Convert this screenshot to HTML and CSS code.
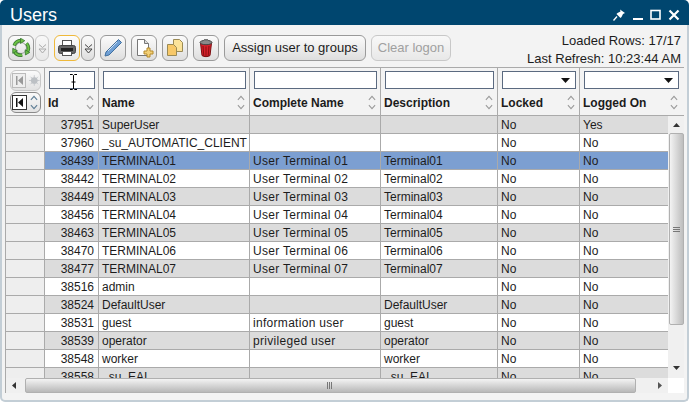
FILE: index.html
```html
<!DOCTYPE html>
<html lang="en">
<head>
<meta charset="utf-8">
<title>Users</title>
<link rel="stylesheet" href="styles.css">
</head>
<body>
<div class="window">
  <header class="titlebar">
    <span class="title">Users</span>
    <div class="win-actions">
      <svg class="win-icon" width="14" height="14" viewBox="0 0 14 14"><path d="M8 1.500l5 3.500-2 1-1.500 3-1 1-4-4 1-1 3-1.500z" fill="#fff"/><path d="M5 8.500l-3.500 4" stroke="#fff" stroke-width="1.3"/></svg>
      <svg class="win-icon" width="12" height="14" viewBox="0 0 12 14"><rect x="1" y="10" width="10" height="2" fill="#fff"/></svg>
      <svg class="win-icon" width="12" height="14" viewBox="0 0 12 14"><rect x="1" y="2.500" width="9" height="8.500" fill="none" stroke="#fff" stroke-width="1.6"/></svg>
      <svg class="win-icon" width="12" height="14" viewBox="0 0 12 14"><path d="M1.500 2.500l9 9M10.500 2.500l-9 9" stroke="#fff" stroke-width="2.2"/></svg>
    </div>
  </header>
  <div class="content">
    <div class="toolbar">
      <button class="tb-btn" type="button">
        <svg width="20" height="20" viewBox="0 0 20 20"><circle cx="10" cy="10" r="5.500" fill="none" stroke="#9a9f9a" stroke-width="1"/><g id="seg"><path d="M3.200 7.500A7.500 7.500 0 0 1 10 2.500" fill="none" stroke="#2f6f2a" stroke-width="3.400"/><path d="M3.200 7.500A7.500 7.500 0 0 1 10 2.500" fill="none" stroke="#6cc045" stroke-width="2"/><path d="M9.500 .2l4.300 2.500-4.300 2.800z" fill="#6cc045" stroke="#2f6f2a" stroke-width=".7"/></g><g transform="rotate(120 10 10)"><path d="M3.200 7.500A7.500 7.500 0 0 1 10 2.500" fill="none" stroke="#2f6f2a" stroke-width="3.400"/><path d="M3.200 7.500A7.500 7.500 0 0 1 10 2.500" fill="none" stroke="#6cc045" stroke-width="2"/><path d="M9.500 .2l4.300 2.500-4.300 2.800z" fill="#6cc045" stroke="#2f6f2a" stroke-width=".7"/></g><g transform="rotate(240 10 10)"><path d="M3.200 7.500A7.500 7.500 0 0 1 10 2.500" fill="none" stroke="#2f6f2a" stroke-width="3.400"/><path d="M3.200 7.500A7.500 7.500 0 0 1 10 2.500" fill="none" stroke="#6cc045" stroke-width="2"/><path d="M9.500 .2l4.300 2.500-4.300 2.800z" fill="#6cc045" stroke="#2f6f2a" stroke-width=".7"/></g></svg>
      </button>
      <button class="tb-arrow is-disabled" type="button">
        <svg width="9" height="11" viewBox="0 0 9 11"><path d="M1 1.500l3.500 3 3.500-3M1 6h7L4.500 10z" fill="none" stroke="#aaa"/></svg>
      </button>
      <button class="tb-btn is-active tb-gap" type="button">
        <svg width="20" height="20" viewBox="0 0 20 20"><rect x="5.500" y="2.500" width="9" height="5" fill="#fff" stroke="#555"/><rect x="1.500" y="7.500" width="17" height="8" rx="2" fill="#666" stroke="#444"/><rect x="4" y="10" width="12" height="3" fill="#222"/><rect x="5.500" y="13.500" width="9" height="4" fill="#fff" stroke="#555"/></svg>
      </button>
      <button class="tb-arrow" type="button">
        <svg width="9" height="11" viewBox="0 0 9 11"><path d="M1 1.500l3.500 3 3.500-3M1 6h7L4.500 10z" fill="none" stroke="#444"/></svg>
      </button>
      <button class="tb-btn tb-gap" type="button">
        <svg width="20" height="20" viewBox="0 0 20 20"><path d="M15.500 1.500l3 3L6 17l-4 1 1-4z" fill="#6f9fd4" stroke="#3f6f9f"/><path d="M5 13l9-9" stroke="#cfe0f2"/></svg>
      </button>
      <button class="tb-btn tb-gap" type="button">
        <svg width="20" height="20" viewBox="0 0 20 20"><path d="M3.500 1.500h7l4 4v12h-11z" fill="#fff" stroke="#777"/><path d="M10.500 1.500v4h4" fill="#ddd" stroke="#777"/><path d="M13 10h3v3h3v3h-3v3h-3v-3h-3v-3h3z" fill="#f3d077" stroke="#b58a2a"/></svg>
      </button>
      <button class="tb-btn tb-gap" type="button">
        <svg width="20" height="20" viewBox="0 0 20 20"><path d="M8.500 1.500h6l3 3v9h-9z" fill="#fbe39a" stroke="#9a8a55"/><path d="M2.500 6.500h6l3 3v8h-9z" fill="#f7c868" stroke="#9a8a55"/></svg>
      </button>
      <button class="tb-btn tb-gap" type="button">
        <svg width="20" height="20" viewBox="0 0 20 20"><path d="M4.500 5l1.500 12.500c1 1.500 7 1.500 8 0L15.500 5c-2 1.500-9 1.500-11 0z" fill="#d8202a" stroke="#7a0d10"/><path d="M7 8l.8 10M10 8.500V18.500M13 8l-.8 10" stroke="#8a0d10"/><ellipse cx="10" cy="4.500" rx="6" ry="2.200" fill="#8a8a8a" stroke="#444"/><rect x="8" y="1" width="4" height="2" fill="#777"/></svg>
      </button>
      <button class="tb-text tb-assign tb-gap" type="button">Assign user to groups</button>
      <button class="tb-text tb-clear tb-gap is-disabled" type="button">Clear logon</button>
      <div class="status">
        <span>Loaded Rows: 17/17</span>
        <span>Last Refresh: 10:23:44 AM</span>
      </div>
    </div>
    <div class="grid">
      <div class="grid-head">
        <div class="hcell hcell-tools">
          <div class="mini-group is-off">
            <span class="mini-first"><svg width="9" height="9" viewBox="0 0 9 9"><path d="M1 0h1.500v9H1zM8 0v9L3 4.500z" fill="#999"/></svg></span>
            <svg width="11" height="11" viewBox="0 0 11 11"><path d="M5.500 0v11M0 5.500h11M1.600 1.600l7.800 7.800M9.400 1.600l-7.800 7.800" stroke="#c4c8cc"/><circle cx="5.500" cy="5.500" r="3.500" fill="#bcc0c4"/></svg>
          </div>
          <div class="mini-group">
            <span class="mini-first"><svg width="9" height="9" viewBox="0 0 9 9"><path d="M1 0h1.500v9H1zM8 0v9L3 4.500z" fill="#111"/></svg></span>
            <svg width="8" height="15" viewBox="0 0 9 16"><path d="M1 5l3.500-4L8 5M1 11l3.500 4L8 11" fill="none" stroke="#5f7f96" stroke-width="1.300"/></svg>
          </div>
        </div>
        <div class="hcell"><input class="filter" type="text" aria-label="Id"><div class="hlabel"><span>Id</span><svg class="sort" width="8" height="15" viewBox="0 0 9 16"><path d="M1 5l3.500-4L8 5M1 11l3.500 4L8 11" fill="none" stroke="#9a9a9a" stroke-width="1.200"/></svg></div></div>
        <div class="hcell"><input class="filter" type="text" aria-label="Name"><div class="hlabel"><span>Name</span><svg class="sort" width="8" height="15" viewBox="0 0 9 16"><path d="M1 5l3.500-4L8 5M1 11l3.500 4L8 11" fill="none" stroke="#9a9a9a" stroke-width="1.200"/></svg></div></div>
        <div class="hcell"><input class="filter" type="text" aria-label="Complete Name"><div class="hlabel"><span>Complete Name</span><svg class="sort" width="8" height="15" viewBox="0 0 9 16"><path d="M1 5l3.500-4L8 5M1 11l3.500 4L8 11" fill="none" stroke="#9a9a9a" stroke-width="1.200"/></svg></div></div>
        <div class="hcell"><input class="filter" type="text" aria-label="Description"><div class="hlabel"><span>Description</span><svg class="sort" width="8" height="15" viewBox="0 0 9 16"><path d="M1 5l3.500-4L8 5M1 11l3.500 4L8 11" fill="none" stroke="#9a9a9a" stroke-width="1.200"/></svg></div></div>
        <div class="hcell"><div class="filter select"><svg width="9" height="5" viewBox="0 0 9 5"><path d="M0 0h9L4.500 5z" fill="#111"/></svg></div><div class="hlabel"><span>Locked</span><svg class="sort" width="8" height="15" viewBox="0 0 9 16"><path d="M1 5l3.500-4L8 5M1 11l3.500 4L8 11" fill="none" stroke="#9a9a9a" stroke-width="1.200"/></svg></div></div>
        <div class="hcell hcell-last"><div class="filter select"><svg width="9" height="5" viewBox="0 0 9 5"><path d="M0 0h9L4.500 5z" fill="#111"/></svg></div><div class="hlabel"><span>Logged On</span><svg class="sort" width="8" height="15" viewBox="0 0 9 16"><path d="M1 5l3.500-4L8 5M1 11l3.500 4L8 11" fill="none" stroke="#9a9a9a" stroke-width="1.200"/></svg></div></div>
      </div>
      <div class="grid-main">
        <div class="rows">
          <div class="row alt"><i></i><b>37951</b><span>SuperUser</span><span></span><span></span><span>No</span><span>Yes</span></div>
          <div class="row"><i></i><b>37960</b><span>_su_AUTOMATIC_CLIENT</span><span></span><span></span><span>No</span><span>No</span></div>
          <div class="row sel"><i></i><b>38439</b><span>TERMINAL01</span><span>User Terminal 01</span><span>Terminal01</span><span>No</span><span>No</span></div>
          <div class="row"><i></i><b>38442</b><span>TERMINAL02</span><span>User Terminal 02</span><span>Terminal02</span><span>No</span><span>No</span></div>
          <div class="row alt"><i></i><b>38449</b><span>TERMINAL03</span><span>User Terminal 03</span><span>Terminal03</span><span>No</span><span>No</span></div>
          <div class="row"><i></i><b>38456</b><span>TERMINAL04</span><span>User Terminal 04</span><span>Terminal04</span><span>No</span><span>No</span></div>
          <div class="row alt"><i></i><b>38463</b><span>TERMINAL05</span><span>User Terminal 05</span><span>Terminal05</span><span>No</span><span>No</span></div>
          <div class="row"><i></i><b>38470</b><span>TERMINAL06</span><span>User Terminal 06</span><span>Terminal06</span><span>No</span><span>No</span></div>
          <div class="row alt"><i></i><b>38477</b><span>TERMINAL07</span><span>User Terminal 07</span><span>Terminal07</span><span>No</span><span>No</span></div>
          <div class="row"><i></i><b>38516</b><span>admin</span><span></span><span></span><span>No</span><span>No</span></div>
          <div class="row alt"><i></i><b>38524</b><span>DefaultUser</span><span></span><span>DefaultUser</span><span>No</span><span>No</span></div>
          <div class="row"><i></i><b>38531</b><span>guest</span><span>information user</span><span>guest</span><span>No</span><span>No</span></div>
          <div class="row alt"><i></i><b>38539</b><span>operator</span><span>privileged user</span><span>operator</span><span>No</span><span>No</span></div>
          <div class="row"><i></i><b>38548</b><span>worker</span><span></span><span>worker</span><span>No</span><span>No</span></div>
          <div class="row alt"><i></i><b>38558</b><span>_su_EAI</span><span></span><span>_su_EAI</span><span>No</span><span>No</span></div>
        </div>
        <div class="vscroll">
          <svg class="arrow" width="7" height="4" viewBox="0 0 7 4"><path d="M0 4h7L3.500 0z" fill="#333"/></svg>
          <div class="vthumb"><svg width="7" height="5" viewBox="0 0 7 5"><path d="M0 .5h7M0 2.500h7M0 4.500h7" stroke="#777"/></svg></div>
          <svg class="arrow" width="7" height="4" viewBox="0 0 7 4"><path d="M0 0h7L3.500 4z" fill="#333"/></svg>
        </div>
      </div>
      <div class="hscroll-row">
        <div class="hscroll">
          <svg class="arrow-h" width="4" height="7" viewBox="0 0 4 7"><path d="M4 0v7L0 3.500z" fill="#333"/></svg>
          <div class="hthumb"><svg width="7" height="7" viewBox="0 0 7 7"><path d="M.5 0v7M2.500 0v7M4.500 0v7" stroke="#777"/></svg></div>
          <svg class="arrow-h" width="4" height="7" viewBox="0 0 4 7"><path d="M0 0v7l4-3.500z" fill="#555"/></svg>
        </div>
        <div class="corner"></div>
      </div>
    </div>
  </div>
  <svg class="cursor" width="7" height="16" viewBox="0 0 7 16"><path d="M0 .5h2.500l1 1 1-1H7M3.500 1.500v13M0 15.500h2.500l1-1 1 1H7M1.500 8h4" fill="none" stroke="#000"/></svg>
</div>
</body>
</html>
```

FILE: styles.css
```css
* { box-sizing: border-box; }
html, body { margin: 0; padding: 0; background: #fff; }
body { width: 689px; height: 403px; overflow: hidden; font-family: "Liberation Sans", Arial, sans-serif; font-size: 12px; color: #1c1c1c; }

.window { position: relative; width: 689px; height: 402px; display: flex; flex-direction: column; }

.titlebar { height: 25px; flex: none; background: #00466f; border-radius: 5px 5px 0 0; display: flex; align-items: center; justify-content: space-between; padding: 4px 9px 0 10px; color: #fff; }
.title { font-size: 18px; line-height: 21px; padding-top: 1px; }
.win-actions { display: flex; align-items: center; gap: 6px; }
.win-icon { display: block; }

.content { flex: 1; min-height: 0; display: flex; flex-direction: column; background: #f3f3f3; border: 1px solid #c3ced6; border-width: 0 2px 2px; border-radius: 0 0 5px 5px; padding: 10px 3px 5px 3px; }

.toolbar { height: 26px; flex: none; display: flex; align-items: stretch; padding-left: 3px; }
.toolbar button { font: inherit; padding: 0; margin: 0; cursor: default; display: flex; align-items: center; justify-content: center; border: 1px solid #9a9a9a; border-radius: 6px; background: linear-gradient(#fbfbfb, #dedede); }
.toolbar .tb-btn { width: 26px; }
.toolbar .tb-arrow { width: 14px; margin-left: 1px; }
.toolbar .tb-gap { margin-left: 5px; }
.toolbar .tb-text { font-size: 13px; color: #1c1c1c; padding-bottom: 1px; }
.toolbar .tb-assign { width: 142px; }
.toolbar .tb-clear { width: 80px; }
.toolbar .is-disabled { border-color: #c8c8c8; color: #a0a0a0; background: linear-gradient(#f8f8f8, #e8e8e8); }
.toolbar .is-active { border-color: #efb93a; background: linear-gradient(#fdfdfd, #e8e8e8); }
.status { margin-left: auto; margin-top: -3px; padding-right: 3px; display: flex; flex-direction: column; align-items: flex-end; font-size: 13px; line-height: 18px; color: #1c1c1c; height: 36px; }

.grid { margin-top: 6px; flex: none; display: flex; flex-direction: column; height: 326px; border-top: 1px solid #aaa; border-left: 1px solid #aaa; background: #fff; width: 679px; }

.grid-head { height: 48px; flex: none; display: grid; grid-template-columns: 39px 54px 151px 131px 117px 82px 1fr; background: #f3f3f3; border-bottom: 1px solid #aaa; }
.hcell { border-right: 1px solid #aaa; padding: 3px 3px 0 4px; display: flex; flex-direction: column; min-width: 0; }
.hcell-last { border-right: 0; padding-right: 5px; }
.hcell-tools { padding: 2px 0 0 4px; gap: 1px; }
.filter { height: 18px; width: 100%; flex: none; border: 1px solid #5b6a80; background: #fff; padding: 0; margin: 0; border-radius: 0; outline: 0; }
.select { display: flex; align-items: center; justify-content: flex-end; padding-right: 5px; }
.hlabel { flex: 1; display: flex; align-items: center; justify-content: space-between; font-weight: 700; padding-right: 1px; margin-left: -1px; }
.hlabel span { padding-top: 2px; }
.sort { flex: none; }

.mini-group { height: 21px; width: 31px; border: 1px solid #8a8a8a; border-radius: 6px; display: flex; align-items: center; gap: 3px; padding-left: 1px; background: linear-gradient(#fafafa, #e2e2e2); }
.mini-group.is-off { border-color: #c8c8c8; }
.mini-first { width: 15px; height: 15px; display: flex; align-items: center; justify-content: center; border: 1px solid #333; background: #fff; }
.is-off .mini-first { border-color: #bbb; background: #eee; }

.grid-main { flex: 1; min-height: 0; display: flex; }
.rows { width: 662px; flex: none; overflow: hidden; }
.row { display: grid; grid-template-columns: 39px 54px 151px 131px 117px 82px 1fr; height: 18px; background: #fff; border-bottom: 1px solid #aaa; line-height: 18px; }
.row.alt { background: #dcdcdc; }
.row.sel { background: #7c9fd1; }
.row > * { border-right: 1px solid #aaa; padding: 0 3px; white-space: nowrap; overflow: hidden; font-weight: 400; font-style: normal; min-width: 0; }
.row > i { background: #eeeeee; }
.row > b { text-align: right; padding-right: 4px; }
.row > span:nth-of-type(2) { letter-spacing: .3px; }
.row > span:last-child { border-right: 0; }

.vscroll { width: 16px; flex: none; background: #f0f0f0; display: flex; flex-direction: column; align-items: center; padding-top: 7px; padding-bottom: 8px; }
.vthumb { width: 15px; height: 192px; margin-top: 6px; background: linear-gradient(90deg, #f3f3f3, #bdbdbd); border: 1px solid #b0b0b0; border-radius: 2px; display: flex; align-items: center; justify-content: center; }
.arrow { flex: none; }
.vscroll .arrow:last-child { margin-top: auto; }

.hscroll-row { height: 15px; flex: none; display: flex; }
.hscroll { width: 662px; flex: none; background: #f0f0f0; display: flex; align-items: center; padding: 0 6px; }
.hthumb { width: 611px; height: 15px; margin: 0 auto 0 9px; background: linear-gradient(#f3f3f3, #b8b8b8); border: 1px solid #b0b0b0; border-radius: 2px; display: flex; align-items: center; justify-content: center; }
.arrow-h { flex: none; }
.corner { width: 16px; background: #fff; }

.cursor { position: absolute; left: 70px; top: 74px; }
```
